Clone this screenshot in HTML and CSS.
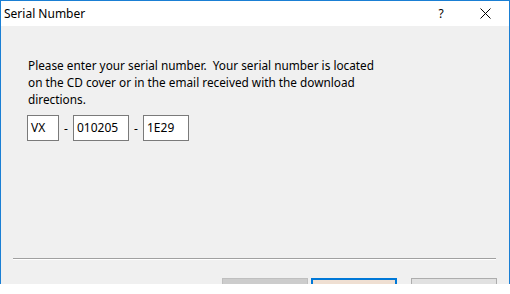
FILE: index.html
```html
<!DOCTYPE html>
<html lang="en">
<head>
    <title>Serial Number</title>
    <link rel="stylesheet" href="styles.css">
</head>
<body>
<div class="window">
    <div class="title_bar">
        <span class="title">Serial Number</span>
        <span class="help">?</span>
        <span class="close">
            <svg width="11" height="11" viewBox="0 0 11 11">
                <path d="M0.5 0.5 L10.5 10.5 M10.5 0.5 L0.5 10.5" stroke="#000" stroke-width="1" fill="none"/>
            </svg>
        </span>
    </div>

    <div class="content">
        <p class="message">Please enter your serial number.&nbsp; Your serial number is located<br>on the CD cover or in the email received with the download<br>directions.</p>

        <div class="serial_row">
            <div class="field field_a">VX</div>
            <span class="dash">-</span>
            <div class="field field_b">010205</div>
            <span class="dash">-</span>
            <div class="field field_c">1E29</div>
        </div>

        <div class="separator"></div>

        <!-- only the top edge of the buttons is inside the picture -->
        <div class="button_row">
            <button class="btn btn_disabled"></button>
            <button class="btn btn_default"></button>
            <button class="btn btn_cancel"></button>
        </div>
    </div>
</div>
</body>
</html>
```

FILE: styles.css
```css
body{
    margin:0;
    background-color:white;
    font-family:"Noto Sans", "Open Sans", sans-serif;
    font-size:12px;
    color:black;
}

.window{
    width:508px;
    height:283px;
    border:1px solid #1a7fd4;
    border-bottom:none;
    background-color:#f0f0f0;
    overflow:hidden;
    display:flex;
    flex-direction:column;
}

.title_bar{
    height:25px;
    background-color:white;
    display:flex;
    align-items:center;
    flex-shrink:0;
}

.title{
    padding-left:3px;
    flex:1;
}

.help{
    width:10px;
    text-align:center;
    margin-right:34px;
}

.close{
    display:flex;
    margin-right:18px;
}

.content{
    padding-top:31px;
    display:flex;
    flex-direction:column;
}

.message{
    margin:0 0 0 27px;
    font-size:11.8px;
    line-height:17px;
}

.serial_row{
    display:flex;
    align-items:center;
    margin-top:7px;
    margin-left:26px;
}

.field{
    height:24px;
    line-height:24px;
    border:1px solid #7a7a7a;
    background-color:white;
    padding-left:3px;
    box-sizing:content-box;
}

.field_a{
    width:27px;
}

.field_b{
    width:51px;
}

.field_c{
    width:41px;
}

.dash{
    width:14px;
    text-align:center;
}

.separator{
    margin-top:117px;
    margin-left:12px;
    width:483px;
    height:1px;
    background-color:#a0a0a0;
    border-bottom:1px solid white;
}

.button_row{
    display:flex;
    margin-top:18px;
    margin-left:221px;
}

.btn{
    width:86px;
    height:23px;
    border:1px solid #adadad;
    background-color:#e1e1e1;
    padding:0;
    margin:0;
}

.btn_disabled{
    background-color:#cccccc;
    border-color:#bfbfbf;
    margin-right:3px;
}

.btn_default{
    border:2px solid #0078d7;
    background-color:#efdfd2;
    margin-right:14px;
}
```
